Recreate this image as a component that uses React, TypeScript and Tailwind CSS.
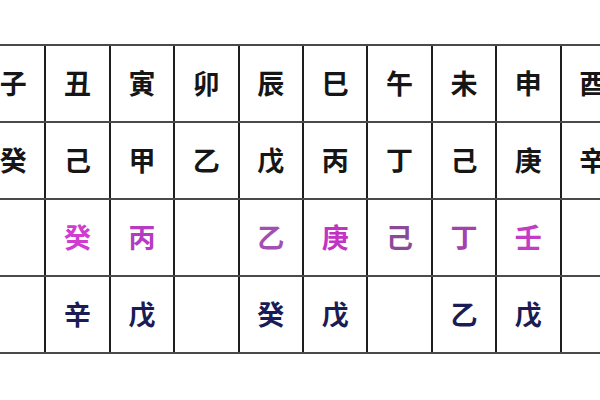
const branches = ['子', '丑', '寅', '卯', '辰', '巳', '午', '未', '申', '酉'];
const main = ['癸', '己', '甲', '乙', '戊', '丙', '丁', '己', '庚', '辛'];

// middle qi, each with its own tint as in the scan
const middle: [string, string][] = [
  ['', ''],
  ['癸', 'text-[#d03ccf]'],
  ['丙', 'text-[#b53cc2]'],
  ['', ''],
  ['乙', 'text-[#a24fb4]'],
  ['庚', 'text-[#c333c3]'],
  ['己', 'text-[#8a4a98]'],
  ['丁', 'text-[#a342ab]'],
  ['壬', 'text-[#c23cc4]'],
  ['', ''],
];

const residual = ['', '辛', '戊', '', '癸', '戊', '', '乙', '戊', ''];

function Row({ cells, color }: { cells: { text: string; cls?: string }[]; color: string }) {
  return (
    <div className="flex h-[77px] border-b-2 border-[#4a4a4a]">
      {cells.map((c, i) => (
        <div
          key={i}
          className={`flex h-full w-[64.4px] shrink-0 items-center justify-center border-l-2 border-[#1e1e1e] text-[27px] font-bold ${c.cls || color}`}
        >
          {c.text}
        </div>
      ))}
    </div>
  );
}

export default function App() {
  return (
    <div
      className="h-[400px] w-[600px] overflow-hidden bg-white pt-[44px]"
      style={{ fontFamily: '"Noto Sans CJK SC", "Noto Sans", sans-serif' }}
    >
      <div className="ml-[-20px] w-[650px] border-t-2 border-[#4a4a4a]">
        <Row cells={branches.map((t) => ({ text: t }))} color="text-[#161616]" />
        <Row cells={main.map((t) => ({ text: t }))} color="text-[#161616]" />
        <Row cells={middle.map(([t, c]) => ({ text: t, cls: c }))} color="text-[#c03cc0]" />
        <Row cells={residual.map((t) => ({ text: t }))} color="text-[#1b1b55]" />
      </div>
    </div>
  );
}
